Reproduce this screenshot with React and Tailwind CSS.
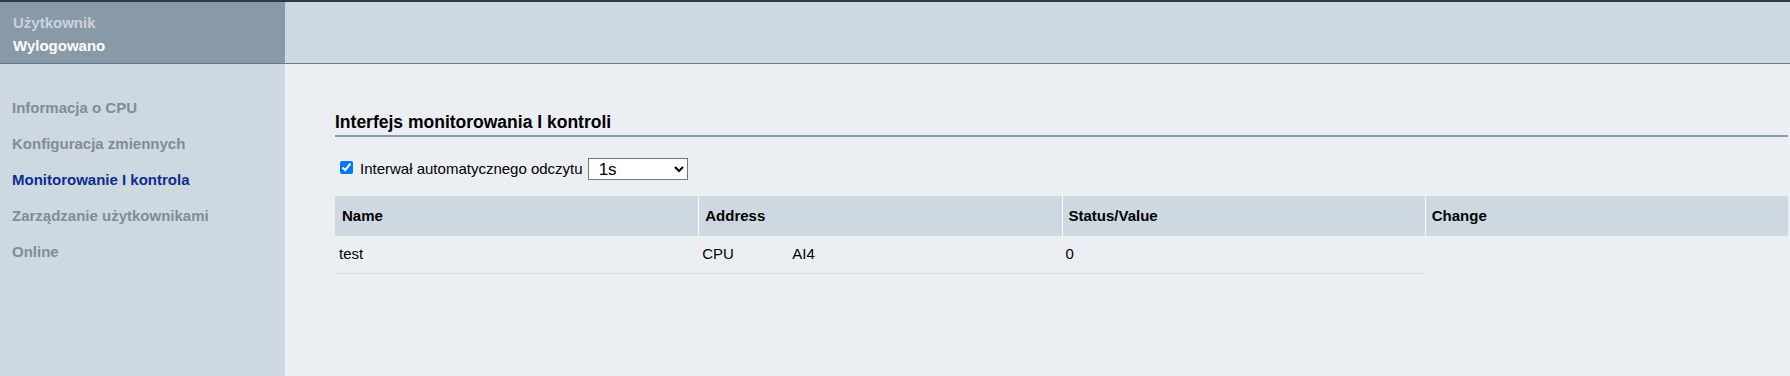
import React from "react";

const font = { fontFamily: '"Liberation Sans", Arial, sans-serif' };

export default function App() {
  const menu = [
    { label: "Informacja o CPU", active: false },
    { label: "Konfiguracja zmiennych", active: false },
    { label: "Monitorowanie I kontrola", active: true },
    { label: "Zarządzanie użytkownikami", active: false },
    { label: "Online", active: false },
  ];
  return (
    <div className="w-[1790px] h-[376px] flex flex-col overflow-hidden bg-[#ebeff3]" style={font}>
      <div className="h-[2px] bg-[#2b3b4b] shrink-0" />
      <div className="h-[62px] flex shrink-0 border-b border-[#687a8b]">
        <div className="w-[285px] bg-[#8899a7] pl-[13px] pt-[9px] font-bold text-[15px] leading-[23px]">
          <div className="text-[#c9d2da]">Użytkownik</div>
          <div className="text-white">Wylogowano</div>
        </div>
        <div className="flex-1 bg-[#cdd8e0]" />
      </div>
      <div className="flex flex-1">
        <div className="w-[285px] bg-[#cdd8e0] pt-[33px] pl-[12px]">
          {menu.map((m) => (
            <div
              key={m.label}
              className={
                "h-[36px] leading-[22px] font-bold text-[15px] " +
                (m.active ? "text-[#0b2e8e]" : "text-[#7f8c99]")
              }
            >
              {m.label}
            </div>
          ))}
        </div>
        <div className="flex-1 pl-[50px] pr-[2px] pt-[48px]">
          <div className="border-b-2 border-[#8a9aa8] pb-[3px]">
            <div className="text-[17.5px] leading-[20px] font-bold text-black">
              Interfejs monitorowania I kontroli
            </div>
          </div>
          <div className="mt-[21px] flex items-center h-[22px] pl-[5px] text-[15px] text-black">
            <input type="checkbox" defaultChecked className="w-[13px] h-[13px] m-0 mr-[7px] -mt-[3px]" />
            <span>Interwał automatycznego odczytu</span>
            <select
              defaultValue="1s"
              className="ml-[5px] w-[100px] h-[22px] bg-white border border-[#767676] text-[17px] pl-[6px] text-black"
            >
              <option value="1s">1s</option>
              <option value="2s">2s</option>
              <option value="5s">5s</option>
            </select>
          </div>
          <div className="mt-[16px]">
            <div className="grid grid-cols-4 h-[40px] bg-[#cdd8e0] font-bold text-black text-[15px]">
              <div className="flex items-center pl-[7px]">Name</div>
              <div className="flex items-center border-l border-white pl-[6px]">Address</div>
              <div className="flex items-center border-l border-white pl-[6px]">Status/Value</div>
              <div className="flex items-center border-l border-white pl-[6px]">Change</div>
            </div>
            <div className="grid grid-cols-4">
              <div className="col-span-3 grid grid-cols-3 h-[38px] items-center border-b border-[#d6dce2] text-black text-[15px]">
                <div className="pl-[4px]">test</div>
                <div className="pl-[4px] flex">
                  <span className="w-[90px]">CPU</span>
                  <span>AI4</span>
                </div>
                <div className="pl-[4px]">0</div>
              </div>
            </div>
          </div>
        </div>
      </div>
    </div>
  );
}
